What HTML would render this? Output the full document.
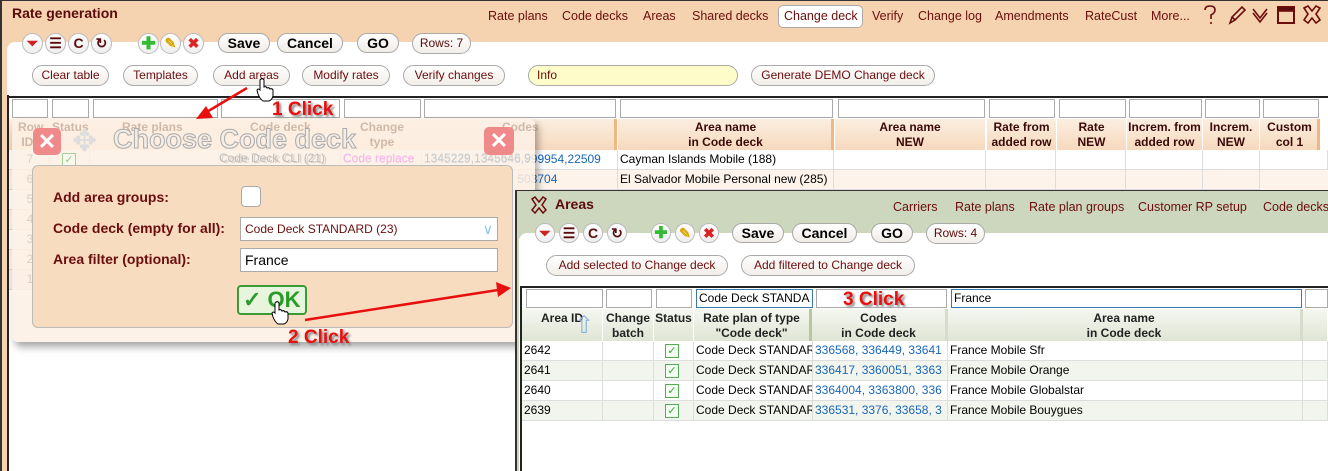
<!DOCTYPE html>
<html><head><meta charset="utf-8">
<style>
*{box-sizing:border-box;margin:0;padding:0}
body{width:1328px;height:471px;overflow:hidden;position:relative;background:#fff;font-family:"Liberation Sans",Arial,sans-serif;font-size:12px;color:#000}
.a{position:absolute}
.peach{background:#f5d3b0}
.lnk{position:absolute;top:9px;color:#6b0d0d;font-size:12.5px;white-space:nowrap}
.ib{position:absolute;width:21px;height:21px;border-radius:50%;border:1px solid #bbb;background:linear-gradient(#fff,#eee);text-align:center;font-weight:bold;font-size:14px;line-height:19px;color:#5a0b0b}
.pb{position:absolute;height:20px;border:1px solid #aaa;border-radius:10px;background:linear-gradient(#fff,#f0ebe6);font-weight:bold;font-size:14px;text-align:center;line-height:18px}
.rb{position:absolute;height:21px;border:1px solid #aaa;border-radius:11px;background:linear-gradient(#fff,#f2eee9);color:#6b0d0d;font-size:12px;text-align:center;line-height:19px;white-space:nowrap}
.fi{position:absolute;height:19px;border:1px solid #aaa;background:#fff}
.hc{position:absolute;text-align:center;font-weight:bold;color:#3a0a0a;font-size:12px;line-height:15px;background:linear-gradient(#fbeee0,#f6d9bd);border-right:1px solid #fff}
.gh{position:absolute;text-align:center;font-weight:bold;color:#222;font-size:12px;line-height:15px;background:linear-gradient(#f5f7f0,#dfe5d4);border-right:1px solid #fff}
.cell{position:absolute;height:20px;line-height:19px;border-bottom:1px solid #ddd;border-right:1px solid #ddd;white-space:nowrap;overflow:hidden;padding-left:2px;font-size:12px}
.red{position:absolute;color:#e8100f;font-weight:bold;font-size:19px;text-shadow:2px 2px 2px #888;white-space:nowrap}
.lbl{position:absolute;left:53px;color:#6b0d0d;font-weight:bold;font-size:14px}
.chk{position:absolute;width:14px;height:14px;border:1px solid #5a5;background:#f4fff4;color:#3a3;font-size:11px;line-height:12px;text-align:center}
.blue{color:#1a66b5}
</style></head><body>

<!-- main window -->
<div class="a peach" style="left:0;top:0;width:1328px;height:471px;border-left:2px solid #333;border-top:1px solid #333"></div>
<div class="a" style="left:7px;top:42px;width:1321px;height:429px;background:#fff;border-radius:8px 0 0 0"></div>
<div class="a" style="left:7px;top:95px;width:2px;height:376px;background:#222"></div>
<div class="a" style="left:12px;top:5px;font-weight:bold;font-size:14px;color:#5a0b0b">Rate generation</div>
<div class="lnk" style="left:488px">Rate plans</div>
<div class="lnk" style="left:562px">Code decks</div>
<div class="lnk" style="left:643px">Areas</div>
<div class="lnk" style="left:692px">Shared decks</div>
<div class="a" style="left:778px;top:5px;width:85px;height:23px;border:1px solid #aaa;border-radius:5px;background:#fff"></div>
<div class="lnk" style="left:784px">Change deck</div>
<div class="lnk" style="left:872px">Verify</div>
<div class="lnk" style="left:918px">Change log</div>
<div class="lnk" style="left:995px">Amendments</div>
<div class="lnk" style="left:1085px">RateCust</div>
<div class="lnk" style="left:1151px">More...</div>
<svg class="a" style="left:1200px;top:4px" width="128" height="22" fill="none" stroke="#6b0d0d" stroke-width="1.6">
<path d="M5 6 Q5 2 10 2 Q15 2 15 6 Q15 9 11 11 L11 15 M11 18 L11 20"/>
<path d="M30 19 L32 13 L42 3 L45 6 L35 16 Z M32 13 L35 16"/>
<path d="M53 5 L60 14 L67 5 M53 9 L60 18 L67 9"/>
<rect x="78" y="3" width="16" height="16" stroke-width="2"/><rect x="78" y="3" width="16" height="4" fill="#5a0b0b"/>
<path d="M104 4 L108 2 L112 7 L116 2 L120 4 L116 10 L120 16 L116 19 L112 14 L108 19 L104 16 L108 10 Z"/>
</svg>

<div class="ib" style="left:22px;top:33px;color:#c22">⏷</div>
<div class="ib" style="left:45px;top:33px">☰</div>
<div class="ib" style="left:68px;top:33px">C</div>
<div class="ib" style="left:91px;top:33px">↻</div>
<div class="ib" style="left:138px;top:33px;color:#3b3;font-size:17px">✚</div>
<div class="ib" style="left:160px;top:33px;color:#d9a600">✎</div>
<div class="ib" style="left:183px;top:33px;color:#d22">✖</div>
<div class="pb" style="left:218px;top:33px;width:52px">Save</div>
<div class="pb" style="left:277px;top:33px;width:66px">Cancel</div>
<div class="pb" style="left:357px;top:33px;width:42px">GO</div>
<div class="rb" style="left:412px;top:33px;width:59px;color:#5a0b0b">Rows: 7</div>

<div class="rb" style="left:32px;top:65px;width:77px">Clear table</div>
<div class="rb" style="left:123px;top:65px;width:75px">Templates</div>
<div class="rb" style="left:213px;top:65px;width:77px">Add areas</div>
<div class="rb" style="left:302px;top:65px;width:88px">Modify rates</div>
<div class="rb" style="left:403px;top:65px;width:102px">Verify changes</div>
<div class="rb" style="left:528px;top:65px;width:210px;background:#fefcc8;text-align:left;padding-left:8px">Info</div>
<div class="rb" style="left:751px;top:65px;width:184px">Generate DEMO Change deck</div>

<!-- main table -->
<div class="a" style="left:7px;top:96px;width:1321px;height:2px;background:#222"></div>
<div class="fi" style="left:12px;top:99px;width:36px"></div>
<div class="fi" style="left:52px;top:99px;width:37px"></div>
<div class="fi" style="left:93px;top:99px;width:125px"></div>
<div class="fi" style="left:221px;top:99px;width:119px"></div>
<div class="fi" style="left:344px;top:99px;width:77px"></div>
<div class="fi" style="left:424px;top:99px;width:192px"></div>
<div class="fi" style="left:620px;top:99px;width:213px"></div>
<div class="fi" style="left:838px;top:99px;width:147px"></div>
<div class="fi" style="left:989px;top:99px;width:66px"></div>
<div class="fi" style="left:1059px;top:99px;width:67px"></div>
<div class="fi" style="left:1129px;top:99px;width:73px"></div>
<div class="fi" style="left:1205px;top:99px;width:55px"></div>
<div class="fi" style="left:1263px;top:99px;width:56px"></div>

<div class="hc" style="left:9px;top:119px;width:609px;height:31px"></div>
<div class="a" style="left:614px;top:119px;width:3px;height:31px;background:#f0b880"></div>
<div class="hc" style="left:618px;top:119px;width:216px;height:31px;padding-top:1px">Area name<br>in Code deck</div>
<div class="a" style="left:831px;top:119px;width:3px;height:31px;background:#f0b880"></div>
<div class="hc" style="left:835px;top:119px;width:151px;height:31px;padding-top:1px">Area name<br>NEW</div>
<div class="hc" style="left:987px;top:119px;width:70px;height:31px;padding-top:1px">Rate from<br>added row</div>
<div class="hc" style="left:1057px;top:119px;width:70px;height:31px;padding-top:1px">Rate<br>NEW</div>
<div class="hc" style="left:1127px;top:119px;width:76px;height:31px;padding-top:1px">Increm. from<br>added row</div>
<div class="hc" style="left:1203px;top:119px;width:57px;height:31px;padding-top:1px">Increm.<br>NEW</div>
<div class="hc" style="left:1260px;top:119px;width:60px;height:31px;padding-top:1px">Custom<br>col 1</div>
<div class="a" style="left:1317px;top:119px;width:3px;height:31px;background:#f0b880"></div>

<div class="cell" style="left:9px;top:150px;width:41px;text-align:center">7</div>
<div class="cell" style="left:50px;top:150px;width:40px"></div>
<div class="cell" style="left:90px;top:150px;width:129px"></div>
<div class="cell" style="left:219px;top:150px;width:122px">Code Deck CLI (21)</div>
<div class="cell" style="left:341px;top:150px;width:81px;color:#e04fd0">Code replace</div>
<div class="cell blue" style="left:422px;top:150px;width:196px">1345229,1345646,999954,22509</div>
<div class="cell" style="left:618px;top:150px;width:216px">Cayman Islands Mobile (188)</div>
<div class="cell" style="left:834px;top:150px;width:152px"></div>
<div class="cell" style="left:986px;top:150px;width:70px"></div>
<div class="cell" style="left:1056px;top:150px;width:70px"></div>
<div class="cell" style="left:1126px;top:150px;width:77px"></div>
<div class="cell" style="left:1203px;top:150px;width:57px"></div>
<div class="cell" style="left:1260px;top:150px;width:68px"></div>
<div class="a" style="left:9px;top:170px;width:1319px;height:20px;background:#fdf3ea"></div>
<div class="cell" style="left:9px;top:170px;width:41px;text-align:center">6</div>
<div class="cell blue" style="left:422px;top:170px;width:196px">&nbsp;&nbsp;&nbsp;&nbsp;&nbsp;&nbsp;&nbsp;&nbsp;&nbsp;&nbsp;&nbsp;&nbsp;&nbsp;&nbsp;&nbsp;&nbsp;&nbsp;&nbsp;&nbsp;&nbsp;&nbsp;&nbsp;&nbsp;&nbsp;&nbsp;&nbsp;&nbsp;&nbsp;503704</div>
<div class="cell" style="left:618px;top:170px;width:216px">El Salvador Mobile Personal new (285)</div>
<div class="cell" style="left:834px;top:170px;width:152px"></div>
<div class="cell" style="left:986px;top:170px;width:70px"></div>
<div class="cell" style="left:1056px;top:170px;width:70px"></div>
<div class="cell" style="left:1126px;top:170px;width:77px"></div>
<div class="cell" style="left:1203px;top:170px;width:57px"></div>
<div class="cell" style="left:9px;top:190px;width:41px;text-align:center">5</div>
<div class="cell" style="left:9px;top:210px;width:41px;text-align:center;background:#fdf3ea">4</div>
<div class="cell" style="left:9px;top:230px;width:41px;text-align:center">3</div>
<div class="cell" style="left:9px;top:250px;width:41px;text-align:center;background:#fdf3ea">2</div>
<div class="cell" style="left:9px;top:270px;width:41px;text-align:center;background:#f3f0ee">1</div>

<!-- dialog -->
<div class="a" style="left:12px;top:118px;width:523px;height:224px;background:rgba(253,240,228,0.86);border-radius:6px;box-shadow:3px 5px 8px rgba(0,0,0,0.35)"></div>
<div class="a" style="left:12px;top:119px;width:520px;height:30px;color:rgba(150,120,100,0.45);font-weight:bold;font-size:12px;line-height:15px">
<span class="a" style="left:6px;top:1px">Row<br>&nbsp;ID</span><span class="a" style="left:40px;top:1px">Status</span><span class="a" style="left:110px;top:1px">Rate plans</span><span class="a" style="left:238px;top:1px">Code deck</span><span class="a" style="left:348px;top:1px;text-align:center">Change<br>type</span><span class="a" style="left:490px;top:1px">Codes</span></div>
<div class="a" style="left:219px;top:151px;color:#bbb;font-size:12px">Code Deck CLI (21)</div>
<div class="a" style="left:343px;top:151px;color:#f2b5ec;font-size:12px">Code replace</div>
<div class="a" style="left:424px;top:151px;color:#ccc;font-size:12px">1345229,1345646,9</div>
<div class="chk" style="left:62px;top:153px;opacity:.5">✓</div>
<div class="a" style="left:33px;top:128px;width:28px;height:27px;border-radius:5px;background:#f08a8a;color:#fff;font-size:22px;line-height:27px;text-align:center;font-weight:bold">✕</div>
<div class="a" style="left:72px;top:124px;font-size:30px;color:#ddd">✥</div>
<div class="a" style="left:113px;top:124px;font-size:27px;font-weight:bold;color:#f5ece4;-webkit-text-stroke:1px #aaa">Choose Code deck</div>
<div class="a" style="left:484px;top:127px;width:30px;height:28px;border-radius:5px;background:#f08a8a;color:#fff;font-size:22px;line-height:28px;text-align:center;font-weight:bold">✕</div>

<div class="a" style="left:32px;top:165px;width:481px;height:163px;background:#f7dcc0;border:1px solid #bbb;border-radius:6px"></div>
<div class="lbl" style="top:189px">Add area groups:</div>
<div class="lbl" style="top:220px">Code deck (empty for all):</div>
<div class="lbl" style="top:251px">Area filter (optional):</div>
<div class="a" style="left:241px;top:186px;width:20px;height:21px;border:1px solid #aaa;border-radius:4px;background:#fff"></div>
<div class="a" style="left:240px;top:217px;width:258px;height:24px;border:1px solid #aaa;background:#fff;color:#6b0d0d;font-size:12px;line-height:22px;padding-left:4px">Code Deck STANDARD (23)<span class="a" style="right:4px;top:0;color:#8cc5e8;font-size:14px">∨</span></div>
<div class="a" style="left:240px;top:248px;width:258px;height:24px;border:1px solid #aaa;background:#fff;font-size:14px;line-height:22px;padding-left:4px">France</div>
<div class="a" style="left:237px;top:285px;width:70px;height:30px;border:2px solid #3a9a3a;border-radius:4px;background:#e8f5dd;color:#2a9a2a;font-size:22px;font-weight:bold;line-height:26px;padding-left:4px">✓ OK</div>

<!-- arrows + cursors -->
<svg class="a" style="left:0;top:0" width="1328" height="471">
<defs><path id="hand" d="M4 0 Q6 -1 7 1 L7 8 Q9 7 10 9 Q12 8 13 10 Q15 9 16 11 L16 17 Q15 21 12 22 L6 22 Q3 20 1 15 L0 11 Q1 9 3 11 L3 1 Z" fill="#fff" stroke="#000" stroke-width="1"/></defs>
<g stroke="#e8100f" stroke-width="2.5" fill="#e8100f">
<line x1="247" y1="88" x2="205" y2="113"/>
<polygon points="196,119 206,106 213,118" stroke="none"/>
<line x1="305" y1="320" x2="498" y2="290"/>
<polygon points="511,288 496,282 498,297" stroke="none"/>
</g>
<use href="#hand" x="257" y="79"/>
<use href="#hand" x="272" y="302"/>
<use href="#hand" x="826" y="266"/>
</svg>
<div class="red" style="left:272px;top:99px">1 Click</div>
<div class="red" style="left:288px;top:327px">2 Click</div>

<!-- Areas window -->
<div class="a" style="left:515px;top:190px;width:813px;height:281px;background:#cdd7bd;border-left:2px solid #333;border-top:1px solid #333"></div>
<div class="a" style="left:519px;top:233px;width:809px;height:238px;background:#fff;border-radius:8px 0 0 0"></div>
<svg class="a" style="left:531px;top:196px" width="18" height="18" fill="none" stroke="#6b0d0d" stroke-width="1.5"><path d="M1 3 L4 1 L8 6 L12 1 L15 3 L11 9 L15 14 L12 17 L8 12 L4 17 L1 14 L5 9 Z"/></svg>
<div class="a" style="left:555px;top:196px;font-weight:bold;font-size:14px;color:#5a0b0b">Areas</div>
<div class="lnk" style="left:893px;top:200px">Carriers</div>
<div class="lnk" style="left:955px;top:200px">Rate plans</div>
<div class="lnk" style="left:1029px;top:200px">Rate plan groups</div>
<div class="lnk" style="left:1138px;top:200px">Customer RP setup</div>
<div class="lnk" style="left:1263px;top:200px">Code decks</div>

<div class="ib" style="left:535px;top:223px;width:20px;height:20px;color:#c22">⏷</div>
<div class="ib" style="left:559px;top:223px;width:20px;height:20px">☰</div>
<div class="ib" style="left:583px;top:223px;width:20px;height:20px">C</div>
<div class="ib" style="left:607px;top:223px;width:20px;height:20px">↻</div>
<div class="ib" style="left:651px;top:223px;width:20px;height:20px;color:#3b3;font-size:16px">✚</div>
<div class="ib" style="left:675px;top:223px;width:20px;height:20px;color:#d9a600">✎</div>
<div class="ib" style="left:699px;top:223px;width:20px;height:20px;color:#d22">✖</div>
<div class="pb" style="left:732px;top:223px;width:52px">Save</div>
<div class="pb" style="left:792px;top:223px;width:65px">Cancel</div>
<div class="pb" style="left:871px;top:223px;width:42px">GO</div>
<div class="rb" style="left:926px;top:223px;width:59px;color:#5a0b0b">Rows: 4</div>
<div class="rb" style="left:546px;top:255px;width:182px">Add selected to Change deck</div>
<div class="rb" style="left:741px;top:255px;width:174px">Add filtered to Change deck</div>

<div class="a" style="left:520px;top:286px;width:808px;height:185px;border-left:2px solid #222;border-top:2px solid #222"></div>
<div class="fi" style="left:526px;top:289px;width:77px"></div>
<div class="fi" style="left:606px;top:289px;width:46px"></div>
<div class="fi" style="left:656px;top:289px;width:36px"></div>
<div class="fi" style="left:696px;top:289px;width:117px;border-color:#3a78b0;padding-left:2px;font-size:12px;line-height:17px">Code Deck STANDA</div>
<div class="fi" style="left:816px;top:289px;width:131px"></div>
<div class="fi" style="left:951px;top:289px;width:351px;border-color:#3a78b0;padding-left:2px;font-size:12px;line-height:17px">France</div>
<div class="fi" style="left:1305px;top:289px;width:23px"></div>
<div class="red" style="left:843px;top:289px">3 Click</div>

<div class="gh" style="left:522px;top:309px;width:81px;height:32px;padding-top:2px">Area ID</div>
<div class="a" style="left:574px;top:311px;font-size:24px;color:#8ab4dd">⇧</div>
<div class="gh" style="left:603px;top:309px;width:51px;height:32px;padding-top:2px">Change<br>batch</div>
<div class="gh" style="left:654px;top:309px;width:40px;height:32px;padding-top:2px">Status</div>
<div class="gh" style="left:694px;top:309px;width:118px;height:32px;padding-top:2px;border-right:3px solid #b8c6a0">Rate plan of type<br>"Code deck"</div>
<div class="gh" style="left:812px;top:309px;width:136px;height:32px;padding-top:2px;border-right:3px solid #d6dccb">Codes<br>in Code deck</div>
<div class="gh" style="left:948px;top:309px;width:355px;height:32px;padding-top:2px;border-right:3px solid #d6dccb">Area name<br>in Code deck</div>
<div class="gh" style="left:1303px;top:309px;width:25px;height:32px"></div>

<div class="a" style="left:522px;top:361px;width:806px;height:20px;background:#f2f5ed"></div>
<div class="a" style="left:522px;top:401px;width:806px;height:20px;background:#f2f5ed"></div>

<div class="cell" style="left:522px;top:341px;width:81px">2642</div><div class="cell" style="left:603px;top:341px;width:51px"></div><div class="cell" style="left:654px;top:341px;width:40px"></div><div class="cell" style="left:694px;top:341px;width:119px">Code Deck STANDARD</div><div class="cell blue" style="left:813px;top:341px;width:135px">336568, 336449, 33641</div><div class="cell" style="left:948px;top:341px;width:355px">France Mobile Sfr</div><div class="cell" style="left:1303px;top:341px;width:25px"></div>
<div class="cell" style="left:522px;top:361px;width:81px">2641</div><div class="cell" style="left:603px;top:361px;width:51px"></div><div class="cell" style="left:654px;top:361px;width:40px"></div><div class="cell" style="left:694px;top:361px;width:119px">Code Deck STANDARD</div><div class="cell blue" style="left:813px;top:361px;width:135px">336417, 3360051, 3363</div><div class="cell" style="left:948px;top:361px;width:355px">France Mobile Orange</div><div class="cell" style="left:1303px;top:361px;width:25px"></div>
<div class="cell" style="left:522px;top:381px;width:81px">2640</div><div class="cell" style="left:603px;top:381px;width:51px"></div><div class="cell" style="left:654px;top:381px;width:40px"></div><div class="cell" style="left:694px;top:381px;width:119px">Code Deck STANDARD</div><div class="cell blue" style="left:813px;top:381px;width:135px">3364004, 3363800, 336</div><div class="cell" style="left:948px;top:381px;width:355px">France Mobile Globalstar</div><div class="cell" style="left:1303px;top:381px;width:25px"></div>
<div class="cell" style="left:522px;top:401px;width:81px">2639</div><div class="cell" style="left:603px;top:401px;width:51px"></div><div class="cell" style="left:654px;top:401px;width:40px"></div><div class="cell" style="left:694px;top:401px;width:119px">Code Deck STANDARD</div><div class="cell blue" style="left:813px;top:401px;width:135px">336531, 3376, 33658, 3</div><div class="cell" style="left:948px;top:401px;width:355px">France Mobile Bouygues</div><div class="cell" style="left:1303px;top:401px;width:25px"></div>
<div class="chk" style="left:665px;top:344px">✓</div>
<div class="chk" style="left:665px;top:364px">✓</div>
<div class="chk" style="left:665px;top:384px">✓</div>
<div class="chk" style="left:665px;top:404px">✓</div>
</body></html>
